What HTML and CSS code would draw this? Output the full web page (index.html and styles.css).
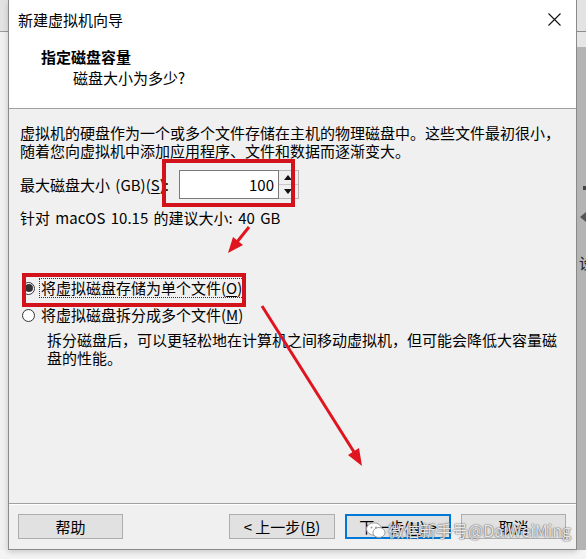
FILE: index.html
```html
<!DOCTYPE html>
<html lang="zh-CN">
<head>
  <meta charset="UTF-8">
  <title>新建虚拟机向导</title>
  <link rel="stylesheet" href="styles.css">
</head>
<body>
  <div class="screen">
    <div class="side side-left"></div>

    <div class="dialog">
      <div class="titlebar">
        <span class="title">新建虚拟机向导</span>
        <span class="close">
          <svg width="13" height="13" viewBox="0 0 13 13"><path d="M0.5 0.5 L12.5 12.5 M12.5 0.5 L0.5 12.5" stroke="#111" stroke-width="1.1" fill="none"/></svg>
        </span>
      </div>

      <div class="header">
        <h1>指定磁盘容量</h1>
        <p>磁盘大小为多少?</p>
      </div>

      <div class="content">
        <p class="intro">虚拟机的硬盘作为一个或多个文件存储在主机的物理磁盘中。这些文件最初很小，<br>随着您向虚拟机中添加应用程序、文件和数据而逐渐变大。</p>

        <div class="size-row">
          <span class="size-label">最大磁盘大小 (GB)(<u>S</u>):</span>
          <div class="spin">
            <span class="spin-value">100</span>
            <div class="spin-btns">
              <span class="spin-up"></span>
              <span class="spin-down"></span>
            </div>
          </div>
        </div>

        <p class="hint">针对 macOS 10.15 的建议大小: 40 GB</p>

        <div class="options">
          <div class="radio-row">
            <span class="radio checked"></span>
            <span class="radio-label focused">将虚拟磁盘存储为单个文件(<u>O</u>)</span>
          </div>
          <div class="radio-row">
            <span class="radio"></span>
            <span class="radio-label">将虚拟磁盘拆分成多个文件(<u>M</u>)</span>
          </div>
          <p class="option-desc">拆分磁盘后，可以更轻松地在计算机之间移动虚拟机，但可能会降低大容量磁<br>盘的性能。</p>
        </div>
      </div>

      <div class="footer">
        <button class="btn">帮助</button>
        <button class="btn btn-back">&lt; 上一步(<u>B</u>)</button>
        <button class="btn btn-primary">下一步(<u>N</u>) &gt;</button>
        <button class="btn">取消</button>
      </div>
    </div>

    <div class="side side-right">
      <span class="peek-dot"></span>
      <span class="peek-arrow"></span>
      <span class="peek-char">设</span>
    </div>

    <svg class="marks" width="586" height="559" viewBox="0 0 586 559">
      <rect x="164" y="161" width="129" height="44" fill="none" stroke="#d3131c" stroke-width="4"/>
      <rect x="24" y="275" width="220" height="30" fill="none" stroke="#d3131c" stroke-width="4"/>
      <line x1="249" y1="227" x2="237" y2="242" stroke="#e0141e" stroke-width="3"/>
      <polygon points="228,253 243,245 233,237" fill="#e0141e"/>
      <line x1="262" y1="306" x2="354" y2="452" stroke="#e0141e" stroke-width="3"/>
      <polygon points="362,466 359,448 348,455" fill="#e0141e"/>
    </svg>

    <div class="watermark">
      <svg width="20" height="17" viewBox="0 0 20 17">
        <ellipse cx="8" cy="7" rx="7.5" ry="6.2" fill="#fff" stroke="#9a9a9a" stroke-width="1"/>
        <ellipse cx="13" cy="10.5" rx="6" ry="5" fill="#fff" stroke="#9a9a9a" stroke-width="1"/>
        <circle cx="5.5" cy="5.5" r="1" fill="#999"/>
        <circle cx="10" cy="5.5" r="1" fill="#999"/>
      </svg>
      <span>微信新手号@DaiWeiMing</span>
    </div>
  </div>
</body>
</html>
```

FILE: styles.css
```css
* { box-sizing: border-box; }
body { margin: 0; background: #f4f4f4; font-family: "Noto Sans CJK SC", "Noto Sans", sans-serif; font-size: 15px; color: #000; }
p, h1 { margin: 0; }
u { text-decoration: underline; text-underline-offset: 2px; }

.screen { position: relative; display: flex; width: 586px; height: 559px; overflow: hidden; }

.side { height: 550px; }
.side-left { width: 8px; background: linear-gradient(#e3e3e3 0 31px, #9a9a9a 31px 32px, #f0f0f0 32px); }
.side-right { flex: 1; display: flex; flex-direction: column; align-items: flex-start; overflow: hidden;
  background: linear-gradient(#e3e3e3 0 31px, #8c8c8c 31px 32px, #e6e6e6 32px 47px, #b4b4b4 47px); }
.peek-dot { width: 4px; height: 4px; background: #444; margin: 186px 0 0 6px; }
.peek-arrow { width: 0; height: 0; border-top: 5px solid transparent; border-bottom: 5px solid transparent; border-right: 6px solid #555; margin: 22px 0 0 3px; }
.peek-char { margin: 32px 0 0 2px; font-size: 15px; line-height: 18px; color: #222; white-space: nowrap; }

.dialog { width: 569px; height: 550px; display: flex; flex-direction: column; background: #f0f0f0;
  border: 1px solid #8a8a8a; border-top: none; box-shadow: 0 2px 6px rgba(0,0,0,.18); }

.titlebar { height: 38px; display: flex; align-items: center; justify-content: space-between; padding-left: 9px; background: #fff; }
.title { font-size: 15px; }
.close { width: 44px; height: 38px; display: flex; align-items: center; justify-content: center; }

.header { background: #fff; padding: 9px 0 20px 32px; border-bottom: 1px solid #a0a0a0; }
.header h1 { font-size: 15px; font-weight: bold; line-height: 20px; }
.header p { line-height: 20px; margin-top: 1px; padding-left: 32px; }

.content { flex: 1; padding: 15px 0 0 11px; }
.intro { line-height: 18px; white-space: nowrap; }

.size-row { display: flex; align-items: center; height: 29px; margin-top: 10px; }
.size-label { white-space: nowrap; word-spacing: 2px; }
.spin { display: flex; height: 29px; margin-left: 10px; }
.spin-value { width: 100px; height: 29px; line-height: 27px; text-align: right; padding-right: 4px; background: #fff; border: 1px solid #7a7a7a; }
.spin-btns { width: 20px; display: flex; flex-direction: column; border: 1px solid #b5b5b5; border-left: none; background: #f0f0f0; }
.spin-up, .spin-down { flex: 1; position: relative; }
.spin-up { border-bottom: 1px solid #c8c8c8; }
.spin-up::after, .spin-down::after { content: ""; position: absolute; left: 5px; top: 4px; border-left: 4px solid transparent; border-right: 4px solid transparent; }
.spin-up::after { border-bottom: 5px solid #111; }
.spin-down::after { border-top: 5px solid #111; }

.hint { margin-top: 10px; line-height: 18px; word-spacing: 2px; }

.options { margin-top: 51px; }
.radio-row { display: flex; align-items: center; height: 20px; }
.radio-row + .radio-row { margin-top: 7px; }
.radio { width: 13px; height: 13px; margin-left: 2px; border: 1px solid #333; border-radius: 50%; background: #fff; position: relative; }
.radio.checked::after { content: ""; position: absolute; left: 1.5px; top: 1.5px; width: 8px; height: 8px; border-radius: 50%; background: #333; }
.radio-label { margin-left: 4px; padding: 0 1px; line-height: 18px; border: 1px solid transparent; white-space: nowrap; }
.radio-label.focused { border: 1px dotted #333; }
.option-desc { margin-top: 6px; padding-left: 27px; line-height: 18px; white-space: nowrap; }

.footer { display: flex; gap: 10px; padding: 10px 10px 10px 9px; border-top: 1px solid #a0a0a0; box-shadow: inset 0 1px #fff; }
.btn { width: 105px; height: 25px; padding: 0; font: inherit; font-size: 15px; line-height: 21px; color: #000; background: #e1e1e1; border: 1px solid #adadad; }
.btn-back { margin-left: auto; width: 106px; }
.btn-primary { width: 106px; border: 2px solid #0078d7; }

.marks { position: absolute; left: 0; top: 0; pointer-events: none; }

.watermark { position: absolute; left: 366px; top: 518px; display: flex; align-items: center; gap: 2px; pointer-events: none;
  font-size: 16px; color: rgba(255,255,255,.85); text-shadow: 0 0 1px #555, 0 0 2px rgba(0,0,0,.5); white-space: nowrap; }
```
